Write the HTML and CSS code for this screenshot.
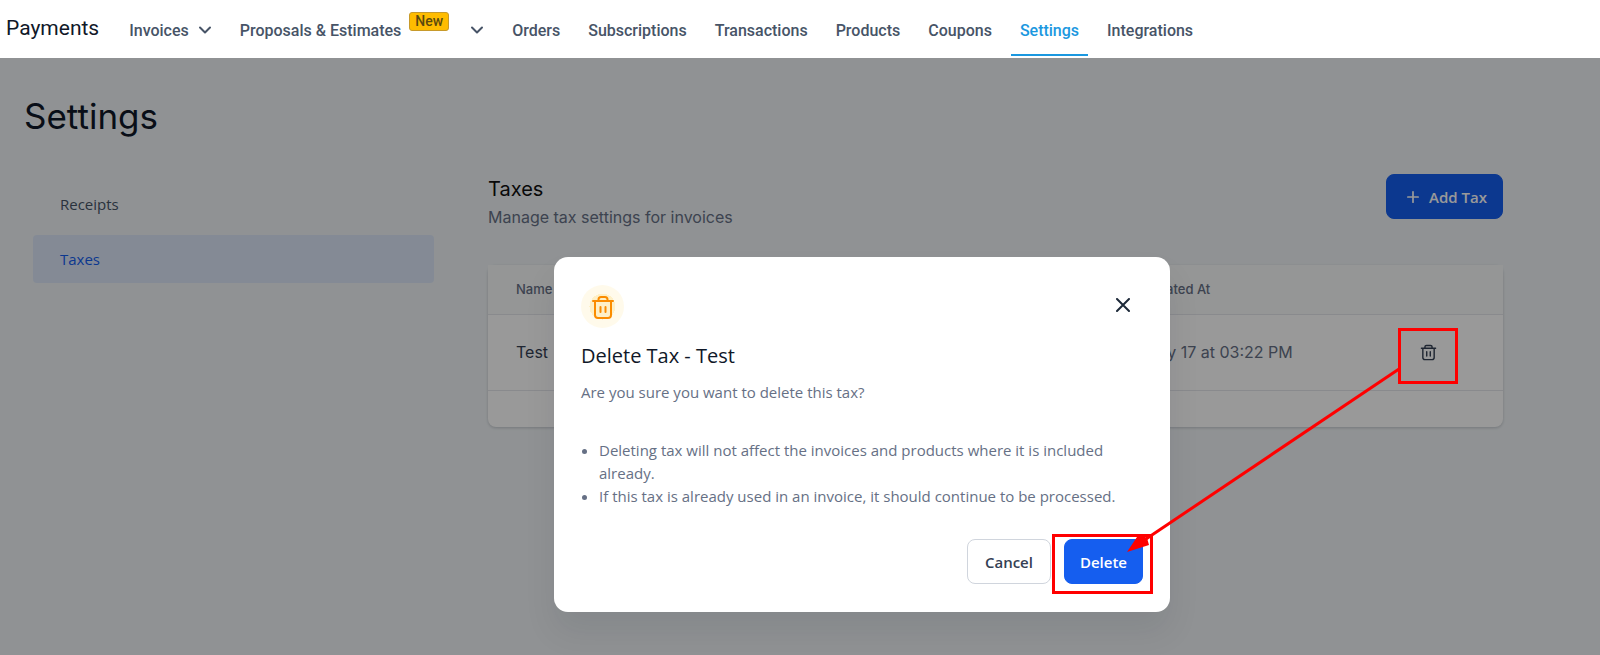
FILE: index.html
```html
<!DOCTYPE html>
<html lang="en">
<head>
  <meta charset="UTF-8" />
  <meta name="viewport" content="width=device-width, initial-scale=1" />
  <title>Payments - Settings</title>
  <link rel="stylesheet" href="styles.css">
</head>
<body>
  <header class="topbar">
    <span class="brand">Payments</span>
    <nav class="nav">
      <a href="#" class="has-menu">Invoices
        <svg class="chevron" viewBox="0 0 14 14"><path d="M2 4.5l5 5 5-5"/></svg>
      </a>
      <a href="#" class="has-menu">Proposals &amp; Estimates
        <span class="badge">New</span>
        <svg class="chevron" viewBox="0 0 14 14"><path d="M2 4.5l5 5 5-5"/></svg>
      </a>
      <a href="#">Orders</a>
      <a href="#">Subscriptions</a>
      <a href="#">Transactions</a>
      <a href="#">Products</a>
      <a href="#">Coupons</a>
      <a href="#" class="active">Settings</a>
      <a href="#">Integrations</a>
    </nav>
  </header>

  <div class="page">
    <h1>Settings</h1>
    <div class="columns">
      <nav class="side">
        <a href="#">Receipts</a>
        <a href="#" class="active">Taxes</a>
      </nav>

      <main class="content">
        <div class="content-head">
          <div>
            <h2>Taxes</h2>
            <p>Manage tax settings for invoices</p>
          </div>
          <button type="button" class="btn primary add">
            <svg class="plus" viewBox="0 0 14 14"><path d="M7 1v12M1 7h12"/></svg>
            Add Tax
          </button>
        </div>

        <div class="card">
          <table>
            <thead>
              <tr><th class="col-name">Name</th><th class="col-date">Created At</th><th class="col-action"></th></tr>
            </thead>
            <tbody>
              <tr>
                <td class="name">Test</td>
                <td>May 17 at 03:22 PM</td>
                <td>
                  <button type="button" class="icon-btn" aria-label="Delete tax">
                    <svg viewBox="0 0 24 24"><path d="M2 6h20M7 6V4a2 2 0 0 1 2-2h6a2 2 0 0 1 2 2v2M4 6v13a3 3 0 0 0 3 3h10a3 3 0 0 0 3-3V6M9.500 11v6M14.500 11v6"/></svg>
                  </button>
                </td>
              </tr>
            </tbody>
          </table>
        </div>
      </main>
    </div>

    <div class="overlay">
      <div class="modal" role="dialog" aria-labelledby="modal-title">
        <div class="modal-top">
          <span class="modal-icon">
            <svg viewBox="0 0 24 24"><path d="M2 6h20M7.500 6V4.500a2.500 2.500 0 0 1 2.500-2.500h4a2.500 2.500 0 0 1 2.500 2.500V6M4 6v14a3 3 0 0 0 3 3h10a3 3 0 0 0 3-3V6M9.500 12v5M14.500 12v5"/></svg>
          </span>
          <button type="button" class="icon-btn close" aria-label="Close">
            <svg viewBox="0 0 14 14"><path d="M1 1l12 12M13 1L1 13"/></svg>
          </button>
        </div>
        <h3 id="modal-title">Delete Tax - Test</h3>
        <p>Are you sure you want to delete this tax?</p>
        <ul>
          <li>Deleting tax will not affect the invoices and products where it is included already.</li>
          <li>If this tax is already used in an invoice, it should continue to be processed.</li>
        </ul>
        <div class="actions">
          <button type="button" class="btn">Cancel</button>
          <button type="button" class="btn primary">Delete</button>
        </div>
      </div>
    </div>
  </div>

  <!-- callouts drawn over the page -->
  <svg class="callouts" width="1600" height="655" viewBox="0 0 1600 655">
    <rect x="1399.500" y="329.500" width="57" height="53"/>
    <rect x="1053.500" y="535.500" width="98" height="57"/>
    <path d="M1399 369L1146 539"/>
    <polygon points="1127,552 1139,534 1147,538 1149,545"/>
  </svg>
</body>
</html>
```
FILE: styles.css
```css
* {
  margin: 0;
  padding: 0;
  box-sizing: border-box;
}
body {
  min-height: 100vh;
  display: flex; flex-direction: column;
  font-family: "Open Sans", sans-serif;
  font-size: 15px; color: #344054;
  background: #f0f4f7;
}
a { color: inherit; text-decoration: none; }
button { font: inherit; color: inherit; cursor: pointer; }
svg { display: block; fill: none; stroke: currentColor; stroke-linecap: round; stroke-linejoin: round; }

/* TOP BAR */
.topbar {
  height: 58px; padding-left: 6px;
  display: flex; align-items: stretch;
  background: #fff;
  font-family: Roboto, sans-serif;
}
.brand {
  margin-right: 21px;
  font-size: 21px; line-height: 56px; color: #101828;
}
.nav { display: flex; gap: 10px; }
.nav a {
  height: 56px; padding: 6px 9px 0;
  display: flex; align-items: center;
  font-size: 16px; font-weight: 500; color: #475467;
  border-bottom: 2px solid transparent;
}
.nav a.active { color: #1b98e0; border-color: #1b98e0; }
.chevron { width: 14px; height: 14px; margin-left: 9px; stroke-width: 2; }
.badge {
  margin: 0 12px 18px 8px; padding: 0 5px;
  font-size: 14px; line-height: 17px; color: #5c4a0e;
  background: #ffbc00;
  border: 1px solid #c79a2b; border-radius: 3px;
}

/* PAGE */
.page {
  flex: 1; position: relative;
  padding: 34px 97px 0 24px;
  font-family: Inter, sans-serif;
}
h1 {
  font-size: 35px; line-height: 48px; font-weight: 400;
  color: #101828;
}
.columns { display: flex; gap: 54px; padding: 34px 0 0 9px; }
.side {
  flex: 0 0 401px; padding-top: 6px;
  display: flex; flex-direction: column; gap: 7px;
  font-family: "Open Sans", sans-serif;
}
.side a {
  padding: 0 27px;
  line-height: 48px; color: #475467;
  border-radius: 4px;
}
.side a.active { background: #dce7f9; color: #155eef; }
.content { flex: 1; }
.content-head { display: flex; justify-content: space-between; align-items: flex-start; }
h2 { font-size: 20px; line-height: 30px; font-weight: 400; color: #101010; }
.content-head p { font-size: 16px; line-height: 26px; color: #667085; }

/* BUTTONS */
.btn {
  height: 45px; padding: 0 17px;
  display: flex; align-items: center; gap: 10px;
  font-family: "Open Sans", sans-serif;
  font-size: 15px; font-weight: 600;
  background: #fff;
  border: 1px solid #d0d5dd; border-radius: 8px;
}
.btn.primary { padding: 0 15px; background: #155eef; border-color: #155eef; color: #fff; }
.btn.add { padding-left: 20px; }
.plus { width: 12px; height: 12px; stroke-width: 2; }
.icon-btn { border: none; background: none; padding: 8px; display: block; }

/* TABLE */
.card {
  margin-top: 35px; padding-bottom: 36px;
  background: #fff;
  border-radius: 8px;
  box-shadow: 0 1px 3px rgba(16,24,40,0.2);
}
table { width: 100%; border-collapse: collapse; table-layout: fixed; text-align: left; }
th {
  height: 49px; padding-left: 28px;
  font-size: 13px; font-weight: 500; color: #667085;
  background: #f9fafb;
  border-bottom: 1px solid #e4e7ec;
}
td {
  height: 76px; padding-left: 28px;
  font-size: 16px; color: #667085;
  border-bottom: 1px solid #e4e7ec;
}
.col-action { width: 113px; }
.col-date { width: 274px; }
td.name { color: #344054; }
td .icon-btn svg { width: 17px; height: 17px; stroke-width: 2; color: #344054; }
td:last-child { padding-left: 22px; }

/* MODAL */
.overlay {
  position: absolute; inset: 0;
  padding: 199px 0 0 124px;
  display: flex; justify-content: center; align-items: flex-start;
  background: rgba(0,0,0,0.4);
  font-family: "Open Sans", sans-serif;
}
.modal {
  width: 616px; padding: 28px 27px;
  background: #fff;
  border-radius: 14px;
  box-shadow: 0 20px 32px rgba(16,24,40,0.08);
}
.modal-top { display: flex; justify-content: space-between; align-items: flex-start; }
.modal-icon {
  width: 43px; height: 43px;
  display: flex; align-items: center; justify-content: center;
  border-radius: 50%;
  background: radial-gradient(circle, #fef0c7 13px, #fffaeb 13px);
  color: #fb8c00;
}
.modal-icon svg { width: 24px; height: 24px; stroke-width: 2; }
.close { padding: 13px; color: #1d2939; }
.close svg { width: 14px; height: 14px; stroke-width: 2; }
h3 { margin-top: 12px; font-size: 20px; line-height: 32px; font-weight: 400; color: #101828; }
.modal p { margin-top: 8px; line-height: 24px; color: #667085; }
.modal ul { margin: 35px 0 31px; padding-left: 18px; line-height: 23px; color: #667085; }
.actions { display: flex; justify-content: flex-end; gap: 13px; }

/* CALLOUTS */
.callouts { position: absolute; top: 0; left: 0; stroke: #f00; stroke-width: 3; stroke-linecap: butt; stroke-linejoin: miter; pointer-events: none; }
.callouts polygon { fill: #f00; stroke: none; }
```
